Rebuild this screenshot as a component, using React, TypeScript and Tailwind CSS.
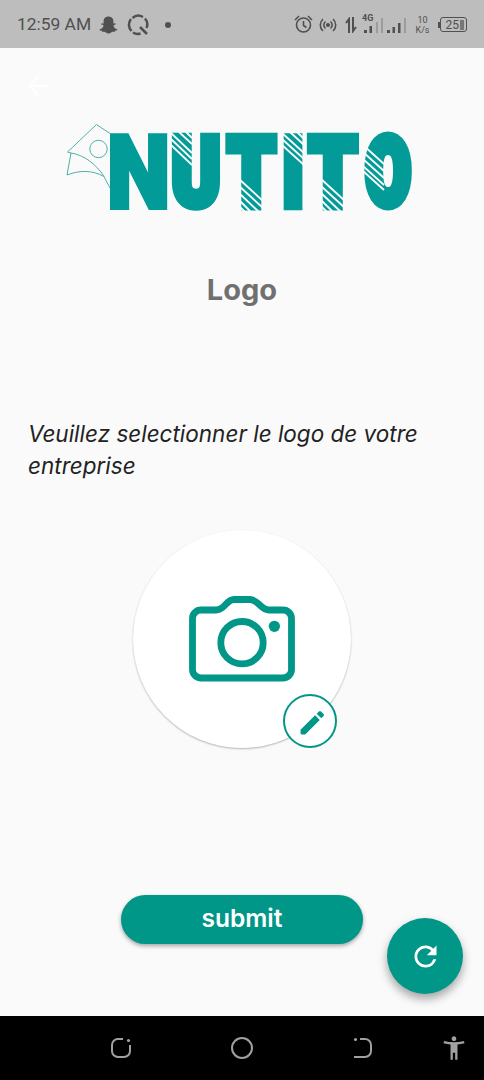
import { FaSnapchatGhost } from "react-icons/fa";
import { MdAccessibilityNew, MdArrowBack, MdRefresh } from "react-icons/md";

const letters = [
  { char: "N", x: 138.5, y: 208, sx: 0.9, sy: 1.02, stroke: 4 },
  { char: "U", x: 196, y: 204.5, sx: 0.73, sy: 0.945, stroke: 8.5 },
  { char: "T", x: 251.5, y: 206, sx: 0.76, sy: 0.96, stroke: 8 },
  { char: "I", x: 293, y: 208, sx: 0.88, sy: 1.02, stroke: 4 },
  { char: "T", x: 333, y: 206, sx: 0.76, sy: 0.96, stroke: 8 },
  { char: "O", x: 388, y: 204, sx: 0.64, sy: 0.92, stroke: 9.5 },
];

function Brand() {
  return (
    <svg viewBox="60 88 360 158" className="w-[360px] h-[158px] -my-[30px] overflow-visible">
      <g fill="none" stroke="#4fb0a9" strokeWidth="1">
        <path d="M110 133.5 96.500 124.500 67.500 152 71 153 67 175C80 170 92 170 104 176.500 96 164 84 155 71 153" />
        <path d="M104 176.500 110 188" />
        <circle cx="98.500" cy="149" r="8.700" />
      </g>
      <g
        fill="#039b98"
        stroke="#039b98"
        strokeLinejoin="miter"
        fontFamily="Roboto, sans-serif"
        fontWeight="900"
        fontSize="100"
        textAnchor="middle"
      >
        {letters.map((l, i) => (
          <text
            key={i}
            transform={`translate(${l.x} ${l.y}) scale(${l.sx} ${l.sy})`}
            strokeWidth={l.stroke}
            vectorEffect="non-scaling-stroke"
          >
            {l.char}
          </text>
        ))}
      </g>
      <g stroke="#fafafa" strokeWidth="1.800">
        <path d="M171 133l21 20M171 139l21 20M171 145l21 20M179 132l13 12M186 132l6 6" />
        <path d="M239 179l24 22M239 186l24 22M239 193l20 19M239 200l12 12M239 206l6 6" />
        <path d="M282 133l22 20M282 139l22 20M282 145l22 20M290 132l14 13M297 132l7 7" />
        <path d="M321 179l24 22M321 186l24 22M321 193l20 19M321 200l12 12M321 206l6 6" />
        <path d="M363 145l21 19M363 152l21 19M363 159l21 19M363 166l21 19M363 171l21 19" />
      </g>
    </svg>
  );
}

function StatusBar() {
  return (
    <header className="h-12 bg-[#bdbdbd] flex items-center pl-[17px] pr-[17px] pt-px text-[#505050] font-['Roboto',sans-serif]">
      <span className="text-[17.4px] w-[76px] whitespace-nowrap">12:59 AM</span>
      <FaSnapchatGhost className="ml-[6px] w-[19px] h-[18px]" />
      <svg viewBox="0 0 22 22" className="ml-[9px] w-[22px] h-[22px]" fill="none" stroke="currentColor" strokeWidth="2.500">
        <path d="M4.500 17A9 9 0 0 1 4 5M5.500 4A9 9 0 0 1 16 3M18 4.500A9 9 0 0 1 19.500 14M13.500 19.500A9 9 0 0 1 6 18.500M13 13l7 7" />
      </svg>
      <span className="ml-4 size-1.5 rounded-full bg-[#505050]" />
      <div className="ml-auto flex items-center">
        <svg viewBox="0 0 19 19" className="w-[19px] h-[19px]" fill="none" stroke="currentColor" strokeWidth="1.600">
          <circle cx="9.500" cy="10" r="7" />
          <path d="M1 5l4-4M18 5l-4-4M9.500 6v4.500l3 2" />
        </svg>
        <svg viewBox="0 0 18 16" className="ml-1.5 w-[18px] h-4" fill="none" stroke="currentColor" strokeWidth="1.600">
          <circle cx="9" cy="8" r="1.300" fill="currentColor" />
          <path d="M6.500 4.500a4.500 4.500 0 0 0 0 7M11.500 4.500a4.500 4.500 0 0 1 0 7M4 2a8 8 0 0 0 0 12M14 2a8 8 0 0 1 0 12" />
        </svg>
        <svg viewBox="0 0 12 16" className="ml-2 w-3 h-4" fill="none" stroke="currentColor" strokeWidth="2">
          <path d="M4 16V2L1 6M8 0v14l3-4" />
        </svg>
        <div className="ml-[5px] w-[21px] h-5 flex flex-col">
          <span className="text-[9px] leading-[6px] font-bold">4G</span>
          <svg viewBox="0 0 21 18" className="-mt-[6px] w-[21px] h-[18px] shrink-0" fill="currentColor">
            <path d="M2 15h3v3H2zM7.500 11h2.500v7H7.500z" />
            <path d="M14 7h2v11h-2zM19 3h2v15h-2z" opacity=".3" />
          </svg>
        </div>
        <svg viewBox="0 0 20 16" className="ml-[4px] w-5 h-4" fill="currentColor">
          <path d="M0 13h3v3H0zM5.500 10H8v6H5.500zM11 6h2.500v10H11z" />
          <path d="M17 1h2v15h-2z" opacity=".3" />
        </svg>
        <div className="ml-[8px] w-[15px] text-center text-[9px] leading-[10px]">
          <div>10</div>
          <div>K/s</div>
        </div>
        <div className="ml-2 w-0.5 h-1.5 bg-[#505050]" />
        <div className="w-[27px] h-[15px] border-[1.5px] border-[#505050] rounded-[3px] flex items-center justify-end gap-px pr-0.5">
          <span className="text-[12px] leading-none">25</span>
          <span className="w-1 h-2.5 bg-[#777]" />
        </div>
      </div>
    </header>
  );
}

function Camera() {
  return (
    <svg viewBox="189 596 106 86" className="w-[106px] h-[86px]" fill="none" stroke="#009688" strokeWidth="6.800">
      <path d="M201 610h15c9 0 10-10.500 18-10.500h16c8 0 11 10.500 19 10.500h14a8.500 8.500 0 0 1 8.500 8.500v51a8.500 8.500 0 0 1-8.500 8.500h-82a8.500 8.500 0 0 1-8.500-8.500v-51a8.500 8.500 0 0 1 8.500-8.500z" />
      <circle cx="242" cy="642.700" r="21.200" />
      <circle cx="274.400" cy="626.300" r="5.600" fill="#009688" stroke="none" />
    </svg>
  );
}

export default function App() {
  return (
    <div className="w-[484px] h-[1080px] flex flex-col overflow-hidden bg-[#fafafa] font-['Inter',sans-serif]">
      <StatusBar />

      <main className="relative flex-1 flex flex-col items-center">
        <button className="self-start ml-[22px] mt-[22px]">
          <MdArrowBack className="size-8 text-white/70" />
        </button>
        <div className="-ml-1 mt-4">
          <Brand />
        </div>

        <h1 className="mt-[54px] text-[29px] leading-10 font-bold text-[#707070]">Logo</h1>

        <p className="mt-[108px] w-full pl-7 text-[22.5px] leading-8 italic text-[#222]">
          Veuillez selectionner le logo de votre
          <br />
          entreprise
        </p>

        <div className="relative mt-12 size-[218px] rounded-full bg-white shadow-[0_1px_2px_rgba(0,0,0,0.28)] flex justify-center pt-[66px]">
          <Camera />
          <button className="absolute left-[150px] top-[163.5px] size-[54px] rounded-full border-2 border-[#009688] bg-white flex items-center justify-center">
            <svg viewBox="0 0 26 26" className="size-[27px] ml-1 mt-1" fill="#009688">
              <path d="M1.500 20 15.500 6l4.500 4.500L6 24.500H3a1.500 1.500 0 0 1-1.500-1.500zM17 4.500l2.200-2.200a1.500 1.500 0 0 1 2 0l2.500 2.500a1.500 1.500 0 0 1 0 2L21.500 9z" />
            </svg>
          </button>
        </div>

        <button className="mt-[147px] w-[242px] h-[49px] rounded-full bg-[#009688] text-white text-[24.5px] font-semibold shadow-[0_2px_4px_rgba(0,0,0,0.35)] pb-0.5">
          submit
        </button>

        <button className="absolute left-[387px] top-[870px] size-[76px] rounded-full bg-[#009688] text-white flex items-center justify-center shadow-[0_5px_10px_rgba(0,0,0,0.35)]">
          <MdRefresh className="size-[33px]" />
        </button>
      </main>

      <nav className="h-16 bg-black flex items-center text-[#a0a0a0]">
        <svg viewBox="0 0 22 22" className="ml-[110px] size-[22px]" fill="none" stroke="currentColor" strokeWidth="2">
          <path d="M13 2H8a6 6 0 0 0-6 6v6a6 6 0 0 0 6 6h6a6 6 0 0 0 6-6V8" />
          <circle cx="18.500" cy="3.500" r="1.600" fill="currentColor" stroke="none" />
        </svg>
        <span className="ml-[99px] size-[22px] rounded-full border-2 border-[#a0a0a0]" />
        <svg viewBox="0 0 20 22" className="ml-[100px] w-5 h-[22px]" fill="none" stroke="currentColor" strokeWidth="2">
          <path d="M7 2h5a6 6 0 0 1 6 6v6a6 6 0 0 1-6 6H1" />
          <circle cx="2.500" cy="2.500" r="1.600" fill="currentColor" stroke="none" />
        </svg>
        <MdAccessibilityNew className="ml-[67px] size-7" />
      </nav>
    </div>
  );
}
